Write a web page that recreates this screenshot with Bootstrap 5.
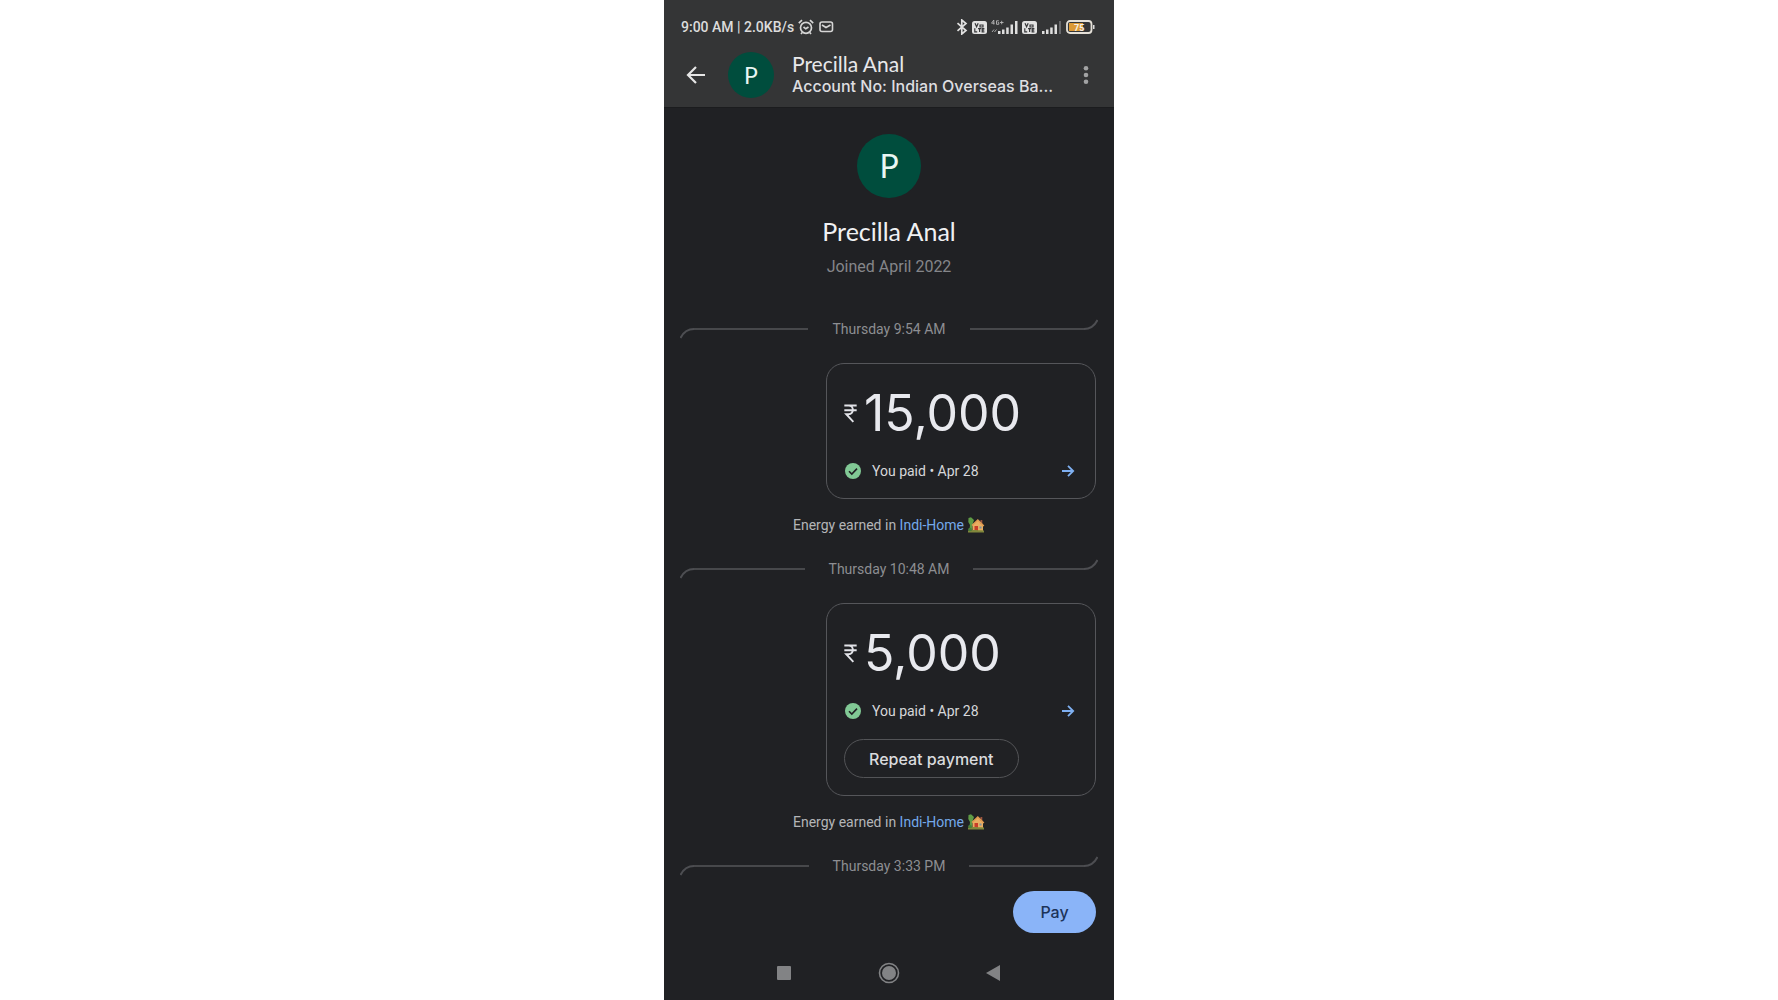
<!DOCTYPE html>
<html lang="en">
<head>
<meta charset="utf-8">
<meta name="viewport" content="width=device-width, initial-scale=1">
<title>Precilla Anal</title>
<link href="https://cdn.jsdelivr.net/npm/bootstrap@5.3.0/dist/css/bootstrap.min.css" rel="stylesheet">
<style>
  body { background: #fff; font-family: Roboto, "Liberation Sans", sans-serif; }
  .phone { max-width: 450px; background: #202124; color: #e4e5e8; }
  .topbar { background: #343536; border-bottom: 1px solid #1b1c1e; padding-bottom: 10px; }
  .status { height: 53px; padding: 1px 19px 0 17px; font-size: 14px; line-height: 20px; font-weight: 500; color: #dcdcdc; }
  .plain-btn { background: none; border: 0; padding: 0; display: flex; color: inherit; }
  .display-face { font-family: Lato, "Liberation Sans", sans-serif; }
  .label-face { font-family: Inter, "Liberation Sans", sans-serif; font-weight: 500; }
  .person { height: 44px; padding: 0 22px 0 22px; }
  .avatar { background: #004d3d; color: #e9f6f3; border-radius: 50%; display: flex; align-items: center; justify-content: center; flex: none; }
  .avatar-sm { width: 46px; height: 46px; font-size: 23px; margin-left: 22px; margin-right: 18px; }
  .avatar-lg { width: 64px; height: 64px; font-size: 32px; }
  .title { font-size: 21px; line-height: 22px; color: #e8e8ea; margin: 0; font-weight: 400; }
  .account { font-size: 16px; line-height: 22px; color: #dedee0; }
  .hero { padding-top: 26px; }
  .hero-name { font-size: 25px; line-height: 32px; margin: 17px 0 0; font-weight: 400; color: #f0f1f3; }
  .joined { font-size: 16px; line-height: 24px; margin: 8px 0 0; color: #85868a; }
  .stamp { height: 24px; padding: 0 16px; font-size: 14px; line-height: 24px; color: #8d8e92; }
  .stamp-first { margin-top: 38px; }
  .rule { flex: 1 1 0; display: flex; height: 20px; align-items: center; }
  .rule svg { fill: none; stroke: #4d4e52; stroke-width: 2; }
  .rule-bar { flex: 1 1 0; height: 2px; background: #47484b; }
  .pay-card { width: 60%; margin: 22px 18px 0 auto; border: 1px solid #55565a; border-radius: 18px; padding: 21px 17px 17px; background: transparent; color: inherit; }
  .amount { font-family: Inter, "Liberation Sans", sans-serif; font-size: 50px; line-height: 56px; color: #e8e9ee; gap: 7px; }
  .paid { font-size: 14px; line-height: 20px; margin-top: 20px; padding-left: 1px; color: #d6d7da; }
  .paid-text { margin-left: 11px; }
  .energy { font-size: 14px; line-height: 20px; margin: 16px 0 22px; color: #b4b5b8; }
  .energy a { color: #74a9ea; text-decoration: none; }
  .repeat { margin-top: 18px; height: 39px; padding: 0 24px; border: 1px solid #535457; border-radius: 20px; font-size: 16px; line-height: 20px; color: #dadbde; background: none; }
  .pay { margin: 13px 18px 0 auto; width: 83px; height: 42px; border: 0; border-radius: 21px; background: #8ab4f8; color: #1d3358; font-size: 16px; line-height: 20px; }
  .navkeys { padding: 0 114px 0 113px; height: 54px; }
  svg { display: block; flex: none; }
</style>
</head>
<body>
<svg width="0" height="0" class="position-absolute" aria-hidden="true">
  <defs>
    <symbol id="volte" viewBox="0 0 15 15">
      <rect x="0" y="1" width="15" height="13" rx="2.5" fill="#e2e2e2"/>
      <path d="M3 3.2l1.6 3.6 1.6-3.6M8 5h3v2H8zM2.8 8.2v3.6h2.4M6 8.6h3.2M7.6 8.6v3.4M12.4 8.6h-2.2v3.2h2.2M10.2 10.2h2" fill="none" stroke="#38393b" stroke-width="1.2"/>
    </symbol>
    <symbol id="check" viewBox="0 0 16 16">
      <circle cx="8" cy="8" r="8" fill="#81c995"/>
      <path d="M4 8.2l2.8 2.8L12 5.6" fill="none" stroke="#202124" stroke-width="1.6"/>
    </symbol>
    <symbol id="go" viewBox="0 0 14 14">
      <path d="M1 7h11M7 1.8L12.2 7 7 12.2" fill="none" stroke="#7fb0f2" stroke-width="1.8"/>
    </symbol>
    <symbol id="rupee" viewBox="0 0 13 20">
      <path d="M0 1.5h13M0 6.5h13M1 1.5h3.5c6 0 6 9.3 0 9.3H2l7.5 8" fill="none" stroke="#e2e3e8" stroke-width="2"/>
    </symbol>
    <symbol id="hook-l" viewBox="0 0 14 20">
      <path d="M.5 19C3 14 7 10 14 10"/>
    </symbol>
    <symbol id="hook-r" viewBox="0 0 14 20">
      <path d="M0 10C7 10 11 6 13.500 1"/>
    </symbol>
    <symbol id="home" viewBox="0 0 17 16">
      <path d="M.5 1l2.500-.8L6 3 4.500 7.500 4 13H1.500L2 8 .3 5z" fill="#5f9b45"/>
      <path d="M4.500 7.500L10 3l5 5v6H4.500z" fill="#e9ae62"/>
      <path d="M12.500 3h1.800v4h-1.800z" fill="#9b5440"/>
      <path d="M4 8.500L9.800 3l6 6" fill="none" stroke="#e09a50" stroke-width="1.600"/>
      <path d="M6.500 9H10v5H6.500z" fill="#c83e2a"/>
      <path d="M11.500 9.500h2v2h-2z" fill="#7d91a0"/>
      <path d="M0 13.500c4-1 9-.5 16 0v2H0z" fill="#81883c"/>
      <circle cx="2" cy="12.500" r="1.800" fill="#47823b"/>
    </symbol>
  </defs>
</svg>

<main class="phone mx-auto min-vh-100 d-flex flex-column">
  <header class="topbar">
    <div class="status d-flex align-items-center">
      <span>9:00 AM | 2.0KB/s</span>
      <svg class="ms-1" width="16" height="16" viewBox="0 0 16 16" fill="none" stroke="#d6d6d6" stroke-width="1.7"><circle cx="8" cy="8.8" r="5.5"/><path d="M.8 4.200L4 1.200M15.200 4.200L12 1.200M5.500 8l2.300 1.800L10.500 8M4.200 13.500l-1.200 1.500M11.800 13.500l1.200 1.500"/></svg>
      <svg class="ms-1" width="16" height="12" viewBox="0 0 16 12" fill="none" stroke="#d6d6d6" stroke-width="1.6"><rect x="2" y="1" width="12.500" height="9.500" rx="2"/><path d="M4 4l4 2.500L12.500 4"/></svg>
      <div class="ms-auto d-flex align-items-center">
        <svg class="me-1" width="12" height="16" viewBox="0 0 12 16" fill="none" stroke="#e0e0e0" stroke-width="1.7"><path d="M1.500 4.200l8.500 7.300-4.200 3.500V1L10 4.500l-8.500 7.300"/></svg>
        <svg class="me-1" width="15" height="15"><use href="#volte"/></svg>
        <svg class="me-1" width="27" height="16" viewBox="0 0 27 16" fill="#dedede"><path d="M7 12h2.500v3H7zM11 10.500h2.500V15H11zM15.200 8.500h2.500V15h-2.500zM19.500 5.500H22V15h-2.500zM24 2h2.500v13H24z"/><path d="M2.800 5.500V1L.5 4.200h3M7.800 1.800H5.500v3.500h2.300V3.600h-1M9 3.500h3.500M10.700 1.800v3.500M1 13l2-2.500M3.500 13l2-2.500" fill="none" stroke="#b8b8b8" stroke-width=".9"/></svg>
        <svg class="me-1" width="15" height="15"><use href="#volte"/></svg>
        <svg class="me-1" width="21" height="16" viewBox="0 0 21 16" fill="#dedede"><path d="M1 12h2.500v3H1zM5 10.500h2.500V15H5zM9.200 8.500h2.500V15H9.200zM13.500 5.500H16V15h-2.500z"/><path d="M18 2h2v13h-2z" fill="#68696b"/></svg>
        <svg width="29" height="14" viewBox="0 0 29 14"><rect x="1" y="1" width="24.500" height="12" rx="3" fill="none" stroke="#e4e0d8" stroke-width="1.8"/><path d="M3 3h14v8H3z" fill="#dc9a35"/><path d="M27 5h1.500v4H27z" fill="#ddd"/><text x="8" y="10.500" font-size="9" font-weight="700" fill="#f6f1e7">75</text></svg>
      </div>
    </div>
    <div class="person d-flex align-items-center">
      <button class="plain-btn" type="button" aria-label="Back"><svg width="20" height="20" viewBox="0 0 20 20" fill="none" stroke="#e6e6e6" stroke-width="2.200"><path d="M19 10H2.500M10 2L2 10l8 8"/></svg></button>
      <div class="avatar avatar-sm display-face">P</div>
      <div>
        <h1 class="title display-face">Precilla Anal</h1>
        <div class="account label-face">Account No: Indian Overseas Ba...</div>
      </div>
      <button class="plain-btn ms-auto" type="button" aria-label="More options"><svg width="12" height="20" viewBox="0 0 12 20" fill="#a2a3a4"><circle cx="6" cy="3.300" r="2.300"/><circle cx="6" cy="10" r="2.300"/><circle cx="6" cy="16.700" r="2.300"/></svg></button>
    </div>
  </header>

  <section class="hero d-flex flex-column align-items-center">
    <div class="avatar avatar-lg display-face">P</div>
    <h2 class="hero-name display-face">Precilla Anal</h2>
    <p class="joined">Joined April 2022</p>
  </section>

  <div class="stamp stamp-first d-flex align-items-center gap-4"><div class="rule"><svg width="14" height="20"><use href="#hook-l"/></svg><div class="rule-bar"></div></div><span>Thursday 9:54 AM</span><div class="rule"><div class="rule-bar"></div><svg width="14" height="20"><use href="#hook-r"/></svg></div></div>
  <article class="pay-card">
    <div class="amount d-flex align-items-center"><svg width="13" height="19" role="img" aria-label="Rupees"><use href="#rupee"/></svg><span>15,000</span></div>
    <div class="paid d-flex align-items-center"><svg width="16" height="16"><use href="#check"/></svg><span class="paid-text">You paid • Apr 28</span><button class="plain-btn ms-auto" type="button" aria-label="Payment details"><svg width="20" height="14"><use href="#go"/></svg></button></div>
  </article>
  <div class="energy d-flex justify-content-center align-items-center gap-1"><span>Energy earned in <a href="#">Indi-Home</a></span><svg width="17" height="16"><use href="#home"/></svg></div>

  <div class="stamp d-flex align-items-center gap-4"><div class="rule"><svg width="14" height="20"><use href="#hook-l"/></svg><div class="rule-bar"></div></div><span>Thursday 10:48 AM</span><div class="rule"><div class="rule-bar"></div><svg width="14" height="20"><use href="#hook-r"/></svg></div></div>
  <article class="pay-card">
    <div class="amount d-flex align-items-center"><svg width="13" height="19" role="img" aria-label="Rupees"><use href="#rupee"/></svg><span>5,000</span></div>
    <div class="paid d-flex align-items-center"><svg width="16" height="16"><use href="#check"/></svg><span class="paid-text">You paid • Apr 28</span><button class="plain-btn ms-auto" type="button" aria-label="Payment details"><svg width="20" height="14"><use href="#go"/></svg></button></div>
    <button class="repeat label-face" type="button">Repeat payment</button>
  </article>
  <div class="energy d-flex justify-content-center align-items-center gap-1"><span>Energy earned in <a href="#">Indi-Home</a></span><svg width="17" height="16"><use href="#home"/></svg></div>

  <div class="stamp d-flex align-items-center gap-4"><div class="rule"><svg width="14" height="20"><use href="#hook-l"/></svg><div class="rule-bar"></div></div><span>Thursday 3:33 PM</span><div class="rule"><div class="rule-bar"></div><svg width="14" height="20"><use href="#hook-r"/></svg></div></div>
  <button class="pay label-face" type="button">Pay</button>

  <nav class="navkeys mt-auto d-flex align-items-center justify-content-between" aria-label="System">
    <button class="plain-btn" type="button" aria-label="Recent apps"><svg width="14" height="14"><rect width="14" height="14" rx="1" fill="#828385"/></svg></button>
    <button class="plain-btn" type="button" aria-label="Home"><svg width="22" height="22" viewBox="0 0 22 22"><circle cx="11" cy="11" r="9.500" fill="none" stroke="#828385" stroke-width="1.600"/><circle cx="11" cy="11" r="7" fill="#828385"/></svg></button>
    <button class="plain-btn" type="button" aria-label="Back key"><svg width="14" height="16" viewBox="0 0 14 16"><path d="M14 0v16L0 8z" fill="#828385"/></svg></button>
  </nav>
</main>
<script src="https://cdn.jsdelivr.net/npm/bootstrap@5.3.0/dist/js/bootstrap.bundle.min.js"></script>
</body>
</html>
